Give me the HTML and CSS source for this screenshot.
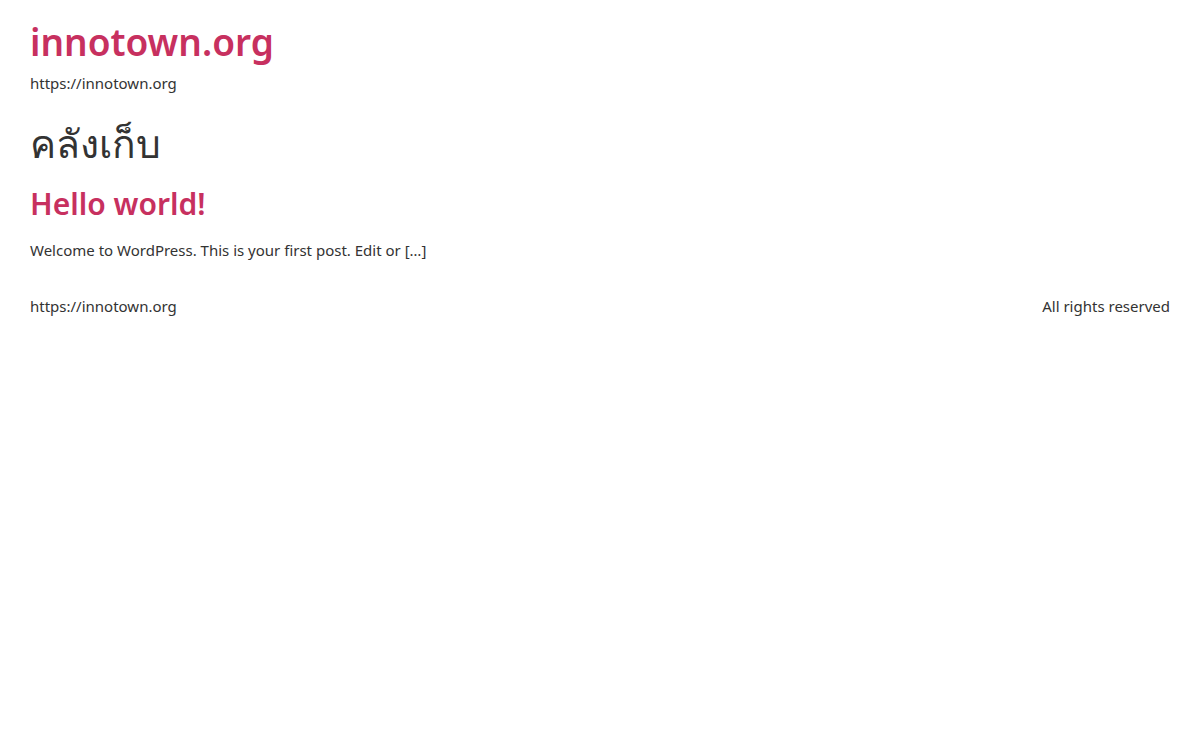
FILE: index.html
```html
<!DOCTYPE html>
<html lang="th">
<head>
  <meta charset="utf-8">
  <title>คลังเก็บ - innotown.org</title>
  <link rel="stylesheet" href="styles.css">
</head>
<body>
  <div class="site">
    <header class="site-header">
      <p class="site-title"><a href="#">innotown.org</a></p>
      <p class="site-description">https://innotown.org</p>
    </header>
    <main class="site-main">
      <h1 class="page-title">คลังเก็บ</h1>
      <article class="post">
        <h2 class="entry-title"><a href="#">Hello world!</a></h2>
        <p class="entry-summary">Welcome to WordPress. This is your first post. Edit or [&hellip;]</p>
      </article>
    </main>
    <footer class="site-footer">
      <span>https://innotown.org</span>
      <span>All rights reserved</span>
    </footer>
  </div>
</body>
</html>
```

FILE: styles.css
```css
body {
  font-family: 'Segoe UI', 'Noto Sans', sans-serif;
  color: #333;
  background-color: #fff;
  margin: 0;
  padding: 0;
}
a {
  color: #c7305f;
  text-decoration: none;
}
.site {
  padding: 20px 30px;
}
.site-title {
  font-size: 37px;
  font-weight: 600;
  line-height: 1.2;
  margin: 0;
}
.site-description {
  font-size: 15px;
  margin: 9px 0 0;
}
.page-title {
  font-size: 39px;
  font-weight: 500;
  line-height: 1.3;
  margin: 25px 0 0;
}
.entry-title {
  font-size: 30px;
  font-weight: 600;
  line-height: 1.3;
  margin: 15px 0 0;
}
.entry-summary {
  font-size: 15px;
  margin: 17px 0 0;
}
.site-footer {
  display: flex;
  justify-content: space-between;
  font-size: 15px;
  margin-top: 36px;
}
```
